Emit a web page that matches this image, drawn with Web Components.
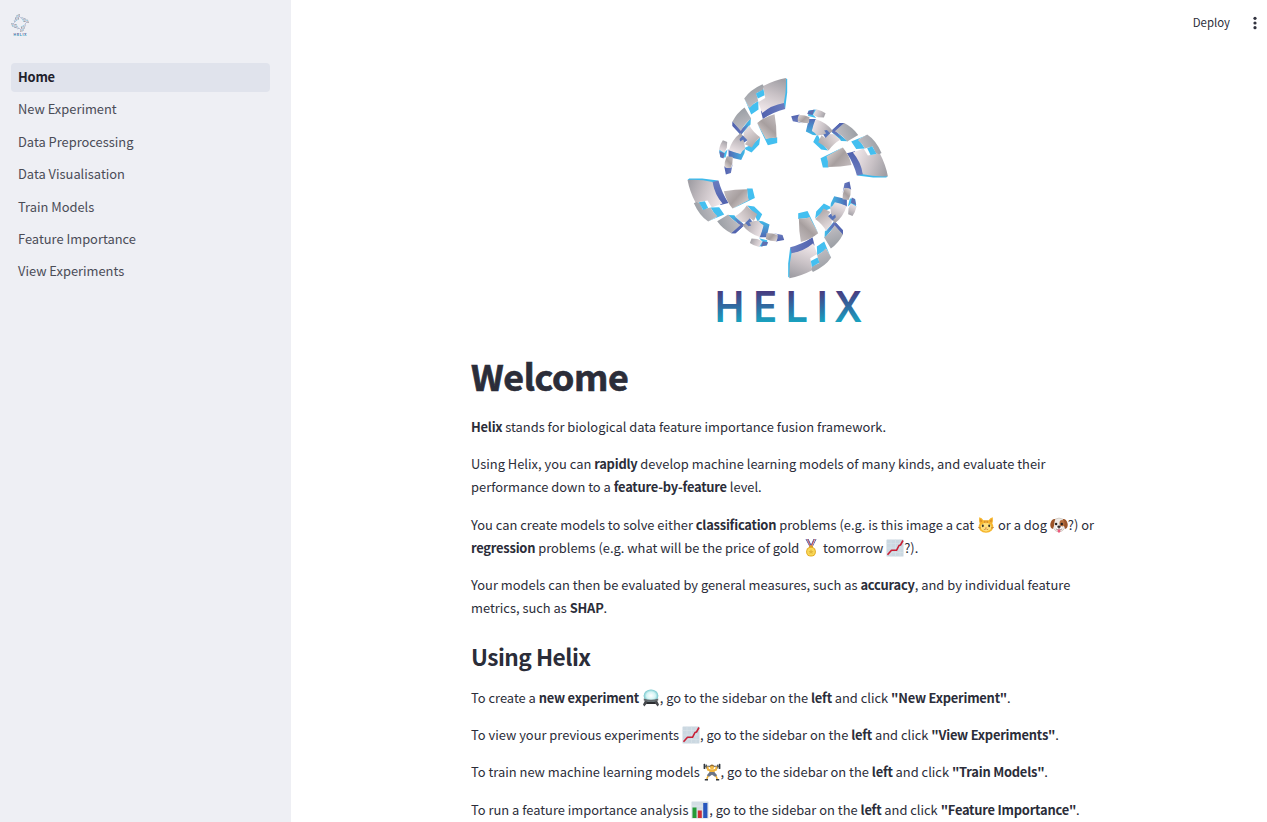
<!DOCTYPE html>
<html lang="en">
<head>
<meta charset="utf-8">
<title>Helix</title>
<style>
html,body{margin:0;height:100%;overflow:hidden;background:#fff}
body{font-family:"Noto Sans CJK SC","Noto Sans",sans-serif;font-size:12.9px;color:#2b2d39}
</style>
</head>
<body>
<helix-app></helix-app>
<script>
const define = (name, html) => customElements.define(name, class extends HTMLElement {
  connectedCallback() {
    if (this.shadowRoot) return;
    const root = this.attachShadow({ mode: 'open' });
    const t = document.createElement('template');
    t.innerHTML = typeof html === 'function' ? html(this) : html;
    root.append(t.content.cloneNode(true));
  }
});

/* One arm of the mark; the mark is this arm turned four times around its centre. */
define('helix-logo', `
<style>:host{display:block}svg{display:block;width:100%;height:100%;overflow:visible}</style>
<svg viewBox="0 0 202 246" role="img" aria-label="Helix logo">
<defs>
<linearGradient id="a" x1=".7" y1="0" x2=".4" y2="1"><stop offset="0" stop-color="#a19fa5"/><stop offset=".45" stop-color="#c8c1c5"/><stop offset="1" stop-color="#f0e7ea"/></linearGradient>
<linearGradient id="b" x1=".3" y1="0" x2=".6" y2="1"><stop offset="0" stop-color="#969ba1"/><stop offset="1" stop-color="#c2bfc4"/></linearGradient>
<linearGradient id="c" x1=".9" y1="0" x2=".2" y2="1"><stop offset="0" stop-color="#c3bcbe"/><stop offset=".5" stop-color="#a79f9f"/><stop offset="1" stop-color="#dcd4d3"/></linearGradient>
<linearGradient id="d" x1=".2" y1="0" x2=".7" y2="1"><stop offset="0" stop-color="#ebe2e4"/><stop offset="1" stop-color="#aba3a4"/></linearGradient>
<linearGradient id="e" x1="0" y1="0" x2="1" y2="0"><stop offset="0" stop-color="#5269b4"/><stop offset="1" stop-color="#3fbcea"/></linearGradient>
<linearGradient id="f" x1="0" y1="0" x2="1" y2="0"><stop offset="0" stop-color="#5061ae"/><stop offset="1" stop-color="#6b7dbf"/></linearGradient>
<linearGradient id="t" gradientUnits="userSpaceOnUse" x1="0" y1="214" x2="0" y2="246"><stop offset="0" stop-color="#493b80"/><stop offset=".5" stop-color="#2f6da3"/><stop offset="1" stop-color="#17a5c1"/></linearGradient>
<g id="arm">
<path fill="#3eb9eb" d="M317 22L321 27L321 66L315 114L307 100Z"/>
<path fill="url(#f)" d="M242 121Q276 100 311 96L315 115Q279 124 248 145Z"/>
<path fill="url(#a)" d="M249 46Q284 28 317 22Q319 63 311 97Q274 103 246 127L234 95L255 82L252 66Z"/>
<path fill="#43bff0" d="M193 84L206 109L234 91L235 117L213 132Z"/>
<path fill="url(#b)" d="M192 84Q209 58 247 41L251 48L249 58L228 68L234 91Q219 98 208 112Z"/>
<path fill="#43bff0" d="M227 69L250 56L253 74L233 84Z"/>
<path fill="url(#e)" d="M157 152L182 178L212 142L211 162L182 193L157 166Z"/>
<path fill="url(#f)" d="M157 154L181 178L204 162L182 193L157 166Z"/>
<path fill="url(#b)" d="M157 153Q170 127 193 111L213 144Q194 158 182 181Z"/>
<path fill="#43bff0" d="M231 158L258 203L291 200L291 217L263 224Z"/>
<path fill="url(#c)" d="M231 157Q254 138 283 131Q289 163 289 202Q272 199 257 206Z"/>
<path fill="#43bff0" d="M193 232L215 222L240 201L237 222L214 246L196 237Z"/>
<path fill="url(#d)" d="M191 184L207 164Q219 185 240 200Q226 210 215 231L194 221L202 210L190 198Z"/>
<path fill="url(#e)" d="M145 237L178 248L195 230L193 247L183 268L145 259Z"/>
<path fill="url(#a)" d="M146 239Q155 207 181 187L190 198L195 235Q187 238 181 250Q163 246 146 239Z"/>
<path fill="#5874b9" d="M178 205L188 195L202 209L192 216L189 207L180 213Z"/>
<path fill="#43bff0" d="M117 236L133 245L142 237L136 261L120 260Z"/>
<path fill="#6070b2" d="M117 242L133 248L130 264L121 260Z"/>
<path fill="url(#a)" d="M116 237Q120 219 128 209L141 214L140 231L133 247Z"/>
<path fill="url(#f)" d="M132 287L153 292L158 277L152 307L137 312Z"/>
<path fill="url(#c)" d="M133 289Q132 273 140 257L158 259Q158 277 152 292Q142 294 133 289Z"/>
</g>
</defs>
<g transform="translate(100.7 101.1) scale(.33333)">
<g transform="translate(-322.5 -322.5)"><use href="#arm"/></g>
<g transform="rotate(90) translate(-322.5 -322.5)"><use href="#arm"/></g>
<g transform="rotate(180) translate(-322.5 -322.5)"><use href="#arm"/></g>
<g transform="rotate(270) translate(-322.5 -322.5)"><use href="#arm"/></g>
</g>
<text transform="scale(.93 1)" x="29.8 71.2 106.2 139.5 158" y="245" font-family="Inter,sans-serif" font-weight="600" font-size="42.5" fill="url(#t)">HELIX</text>
</svg>`);

const emoji = {
cat: `<path fill="#f6b62e" d="M2.2 1.2Q5 1.8 6.3 4.2H11.7Q13 1.8 15.8 1.2Q16.3 5 15.3 7.5Q17.6 11 14.8 14.5Q12.5 16.7 9 16.7T3.2 14.5Q.4 11 2.7 7.5Q1.7 5 2.2 1.2Z"/><path fill="#ffe07a" d="M4 9Q9 4 14 9Q16 14 9 15.5Q2 14 4 9Z"/><path fill="#d98b28" d="M3 3L5.4 5L3.6 6.6ZM15 3L12.6 5L14.4 6.6Z"/><path stroke="#d68a2b" stroke-width=".8" d="M7.5 4.8V7M9 4.6V7.3M10.5 4.8V7"/><ellipse cx="5.8" cy="9.8" rx="1" ry="1.4" fill="#39362b"/><ellipse cx="12.2" cy="9.8" rx="1" ry="1.4" fill="#39362b"/><path fill="#d96c72" d="M8 11.5H10L9 12.7Z"/><path fill="none" stroke="#a7652a" stroke-width=".6" d="M9 12.6Q8 14.4 6.8 13.2M9 12.6Q10 14.4 11.2 13.2M1 11.5L4 12M17 11.5L14 12"/>`,
dog: `<path fill="#eeebe7" stroke="#b8aaa0" stroke-width=".5" d="M5 3.2Q9 .8 13 3.2Q15.5 6 14.8 12Q12.5 16 9 16T3.2 12Q2.5 6 5 3.2Z"/><path fill="#9b5428" d="M5.2 3Q1.5 2.5.3 8Q0 12 2.7 13Q4.4 10 4.5 6ZM12.8 3Q16.5 2.5 17.7 8Q18 12 15.3 13Q13.6 10 13.5 6Z"/><ellipse cx="12" cy="7.3" rx="2.5" ry="3.2" fill="#b46d3c"/><circle cx="6.1" cy="8" r="1.2" fill="#25221f"/><circle cx="11.8" cy="8" r="1.2" fill="#25221f"/><ellipse cx="9" cy="12" rx="3.2" ry="2.2" fill="#fff"/><ellipse cx="9" cy="10.8" rx="1.7" ry="1.2" fill="#302b2a"/><path fill="none" stroke="#66534a" stroke-width=".6" d="M9 11V13Q7 14.4 6 12.8M9 13Q11 14.4 12 12.8"/><path fill="#ef587b" d="M7.7 13.6H10.3V15.7Q9 17.4 7.7 15.7Z"/>`,
medal: `<path fill="#36469b" d="M3.5 0H6.5L10.5 8.5H8ZM14.5 0H11.5L8 8L10 9Z"/><path fill="#fff" d="M4.4 0H5.6L9.3 8H8.4ZM13.6 0H12.4L9 7.5L10 8Z"/><path fill="#d34139" d="M4.8 0H5.5L9.5 8.5H8.6ZM13 0H12.3L8.8 7.5L9.6 8Z"/><rect x="7.3" y="6.6" width="3.6" height="2.4" rx=".5" fill="#d99f24"/><circle cx="9" cy="12.7" r="4.9" fill="#e3a81c"/><circle cx="9" cy="12.7" r="3.9" fill="#f8d95a"/><path fill="#e3b53a" d="M9 10L9.8 12H11.6L10.2 13.2L10.8 15L9 13.9L7.2 15L7.8 13.2L6.4 12H8.2Z"/>`,
chart: `<rect x=".5" y=".5" width="17" height="17" rx=".6" fill="#cbd8e1"/><path stroke="#dae4ea" stroke-width=".6" d="M.5 4.5H17.5M.5 9H17.5M.5 13.5H17.5M5 .5V17.5M9.5 .5V17.5M14 .5V17.5"/><path fill="none" stroke="#c91f35" stroke-width="1.6" stroke-linejoin="round" d="M1.5 15.8L5.5 11.3L10.5 11.3L13 6.5L14.5 6L17 1.5"/>`,
ball: `<defs><radialGradient id="g"><stop stop-color="#fff"/><stop offset=".6" stop-color="#d3f4f4"/><stop offset="1" stop-color="#72c5cb"/></radialGradient></defs><path fill="#47494d" d="M3.8 10H14.2L17 15.5L15.7 17.5L13.6 15H4.4L2.3 17.5L1 15.5Z"/><ellipse cx="9" cy="6.7" rx="7.4" ry="6.3" fill="url(#g)"/><path fill="#64696d" d="M1.8 9.6Q9 12 16.2 9.6V11.5Q9 14.5 1.8 11.5Z"/><path fill="#2b2d30" d="M5.3 13H12.7L13.4 15H4.6Z"/>`,
lift: `<path stroke="#555c64" stroke-width="1.1" d="M1 3.3H17"/><rect x=".6" y=".8" width="1.6" height="5.2" rx=".6" fill="#30353b"/><rect x="2.6" y="1.4" width="1.4" height="4" rx=".5" fill="#515961"/><rect x="15.8" y=".8" width="1.6" height="5.2" rx=".6" fill="#30353b"/><rect x="14" y="1.4" width="1.4" height="4" rx=".5" fill="#515961"/><path fill="none" stroke="#efb33c" stroke-width="2" d="M4.4 3.5L5 6.7L9 8L13 6.7L13.6 3.5"/><circle cx="9" cy="4.3" r="2.1" fill="#f3bc47"/><path fill="#94692d" d="M6.9 3.7Q7 1.5 9 1.6T11.1 3.7Q9 2.4 6.9 3.7Z"/><path fill="#efb33c" d="M6 6.6H12L11.3 11H6.7Z"/><path fill="#6b7485" d="M6.7 9H11.3L14.2 12.2L12.3 14L9 11.7L5.7 14L3.8 12.2Z"/><path stroke="#efb33c" stroke-width="1.6" d="M5 13L3.8 16M13 13L14.2 16"/><path fill="#30353b" d="M1.8 16H5V17.5H1.8ZM13 16H16.2V17.5H13Z"/>`,
bars: `<rect x=".5" y=".5" width="17" height="17" rx=".5" fill="#d3dde4"/><path stroke="#e4ecf0" stroke-width=".6" d="M.5 5H17.5M.5 9H17.5M.5 13H17.5"/><path fill="#249b37" d="M1.5 6.5H5.5V17H1.5Z"/><path fill="#ce3037" d="M6.8 9.5H10.8V17H6.8Z"/><path fill="#2857bd" d="M12.2 2H16.4V17H12.2Z"/>`
};
define('emoji-icon', el => `
<style>:host{display:inline-block;width:18px;height:18px;vertical-align:-4px;line-height:0}svg{display:block;width:18px;height:18px}</style>
<svg viewBox="0 0 18 18" role="img" aria-label="${el.getAttribute('name')}">${emoji[el.getAttribute('name')]}</svg>`);

define('nav-item', `
<style>
:host{display:flex;align-items:center;box-sizing:border-box;height:28.8px;margin-bottom:3.6px;padding:0 7px 1.6px;border-radius:4px;color:#4a4c57;font-size:12.88px;white-space:nowrap}
:host([active]){background:#e0e3ec;color:#1f212b;font-weight:700;letter-spacing:-.2px}
</style><slot></slot>`);

define('side-bar', `
<style>
:host{display:block;box-sizing:border-box;width:291px;flex:none;background:#eeeff4;padding:14px 21px 0 11px}
helix-logo{width:18px;height:22px}
nav{margin-top:27px}
</style>
<helix-logo></helix-logo>
<nav><nav-item active>Home</nav-item><nav-item>New Experiment</nav-item><nav-item>Data Preprocessing</nav-item><nav-item>Data Visualisation</nav-item><nav-item>Train Models</nav-item><nav-item>Feature Importance</nav-item><nav-item>View Experiments</nav-item></nav>`);

define('top-bar', `
<style>
:host{display:flex;height:46px;justify-content:flex-end;align-items:center;box-sizing:border-box;padding-right:9px;gap:22px;font-size:11.4px}
span{padding-bottom:2px}
svg{width:6px;height:14px;display:block}
</style>
<span>Deploy</span><svg viewBox="0 0 6 14" fill="#31333f"><circle cx="3" cy="2.3" r="1.6"/><circle cx="3" cy="7" r="1.6"/><circle cx="3" cy="11.7" r="1.6"/></svg>`);

define('text-block', `
<style>:host{display:block;line-height:23.04px;margin-bottom:14.4px;white-space:nowrap}::slotted(b){font-weight:700;letter-spacing:-.22px}</style><slot></slot>`);

define('page-heading', el => `
<style>
:host{display:block}
h1,h2{margin:0;white-space:nowrap}
h1{font-size:35.7px;line-height:48px;font-weight:700;letter-spacing:-.35px;-webkit-text-stroke:.7px #2b2d39}
h2{font-size:22.7px;line-height:30px;font-weight:700;letter-spacing:-.53px}
</style><${el.getAttribute('level')}><slot></slot></${el.getAttribute('level')}>`);

define('welcome-page', `
<style>
:host{display:block;width:634px;margin-left:180px;padding-top:31px}
helix-logo{width:202px;height:246px;margin:0 auto 29px}
.w{margin-bottom:15px}
.u{margin:22px 0 14px}
</style>
<helix-logo></helix-logo>
<page-heading class="w" level="h1">Welcome</page-heading>
<text-block><b>Helix</b> stands for biological data feature importance fusion framework.</text-block>
<text-block>Using Helix, you can <b>rapidly</b> develop machine learning models of many kinds, and evaluate their<br>performance down to a <b>feature-by-feature</b> level.</text-block>
<text-block>You can create models to solve either <b>classification</b> problems (e.g. is this image a cat <emoji-icon name="cat"></emoji-icon> or a dog <emoji-icon name="dog"></emoji-icon>?) or<br><b>regression</b> problems (e.g. what will be the price of gold <emoji-icon name="medal"></emoji-icon> tomorrow <emoji-icon name="chart"></emoji-icon>?).</text-block>
<text-block>Your models can then be evaluated by general measures, such as <b>accuracy</b>, and by individual feature<br>metrics, such as <b>SHAP</b>.</text-block>
<page-heading class="u" level="h2">Using Helix</page-heading>
<text-block>To create a <b>new experiment</b> <emoji-icon name="ball"></emoji-icon>, go to the sidebar on the <b>left</b> and click <b>"New Experiment"</b>.</text-block>
<text-block>To view your previous experiments <emoji-icon name="chart"></emoji-icon>, go to the sidebar on the <b>left</b> and click <b>"View Experiments"</b>.</text-block>
<text-block>To train new machine learning models <emoji-icon name="lift"></emoji-icon>, go to the sidebar on the <b>left</b> and click <b>"Train Models"</b>.</text-block>
<text-block>To run a feature importance analysis <emoji-icon name="bars"></emoji-icon>, go to the sidebar on the <b>left</b> and click <b>"Feature Importance"</b>.</text-block>`);

define('helix-app', `
<style>:host{display:flex;height:100vh;overflow:hidden}main{flex:1;min-width:0}</style>
<side-bar></side-bar><main><top-bar></top-bar><welcome-page></welcome-page></main>`);
</script>
</body>
</html>
